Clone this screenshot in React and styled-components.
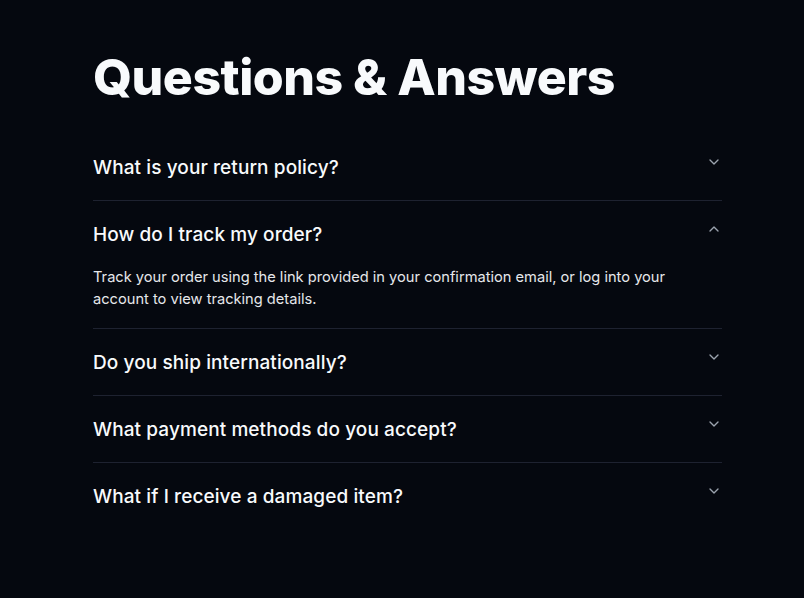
import React, { useState } from 'react';
import styled, { createGlobalStyle } from 'styled-components';

const GlobalStyle = createGlobalStyle`
  html, body {
    margin: 0;
    padding: 0;
    background: #05080f;
  }
  body {
    font-family: Inter, 'Liberation Sans', sans-serif;
    -webkit-font-smoothing: antialiased;
  }
`;

const faqs = [
  {
    q: 'What is your return policy?',
    a: 'You can return any item within 30 days of purchase for a full refund, as long as it is unused and in its original packaging.',
  },
  {
    q: 'How do I track my order?',
    a: 'Track your order using the link provided in your confirmation email, or log into your account to view tracking details.',
  },
  {
    q: 'Do you ship internationally?',
    a: 'Yes, we ship to most countries worldwide. Shipping costs and delivery times vary by destination.',
  },
  {
    q: 'What payment methods do you accept?',
    a: 'We accept all major credit cards, PayPal, Apple Pay and Google Pay.',
  },
  {
    q: 'What if I receive a damaged item?',
    a: 'Contact our support team within 7 days with photos of the damage and we will send a replacement.',
  },
];

const Chevron = ({ open }) => (
  <svg width="16" height="16" viewBox="0 0 24 24" fill="none" stroke="currentColor" strokeWidth="2" strokeLinecap="round" strokeLinejoin="round">
    {open ? <path d="m18 15-6-6-6 6" /> : <path d="m6 9 6 6 6-6" />}
  </svg>
);

const App = () => {
  const [openIndex, setOpenIndex] = useState(1);

  return (
    <>
      <GlobalStyle />
      <Page>
        <Section>
          <Title>Questions &amp; Answers</Title>
          <List>
            {faqs.map((item, i) => (
              <Item key={item.q} $last={i === faqs.length - 1}>
                <Trigger onClick={() => setOpenIndex(openIndex === i ? -1 : i)}>
                  <Question>{item.q}</Question>
                  <IconWrap>
                    <Chevron open={openIndex === i} />
                  </IconWrap>
                </Trigger>
                {openIndex === i && <Answer>{item.a}</Answer>}
              </Item>
            ))}
          </List>
        </Section>
      </Page>
    </>
  );
};

const Page = styled.div`
  min-height: 598px;
  background: #05080f;
  box-sizing: border-box;
  padding: 47px 82px 40px 93px;
`;

const Section = styled.section`
  width: 629px;
`;

const Title = styled.h1`
  margin: 0 0 27px;
  color: #f8fafc;
  font-size: 50px;
  font-weight: 800;
  line-height: 60px;
  letter-spacing: -0.01em;
`;

const List = styled.div`
  display: flex;
  flex-direction: column;
`;

const Item = styled.div`
  border-bottom: ${(p) => (p.$last ? 'none' : '1px solid #1e2230')};
`;

const Trigger = styled.button`
  all: unset;
  box-sizing: border-box;
  width: 100%;
  display: flex;
  align-items: flex-start;
  justify-content: space-between;
  padding: 21px 0 19px;
  cursor: pointer;
`;

const Question = styled.span`
  color: #f8fafc;
  font-size: 19px;
  font-weight: 500;
  line-height: 26px;
  letter-spacing: 0.005em;
`;

const IconWrap = styled.span`
  display: flex;
  color: #9ca3af;
  margin-top: -1px;
`;

const Answer = styled.p`
  margin: -1px 0 0;
  padding-bottom: 18px;
  color: #e5e7eb;
  font-size: 14.65px;
  line-height: 22px;
  max-width: 600px;
`;

export default App;
